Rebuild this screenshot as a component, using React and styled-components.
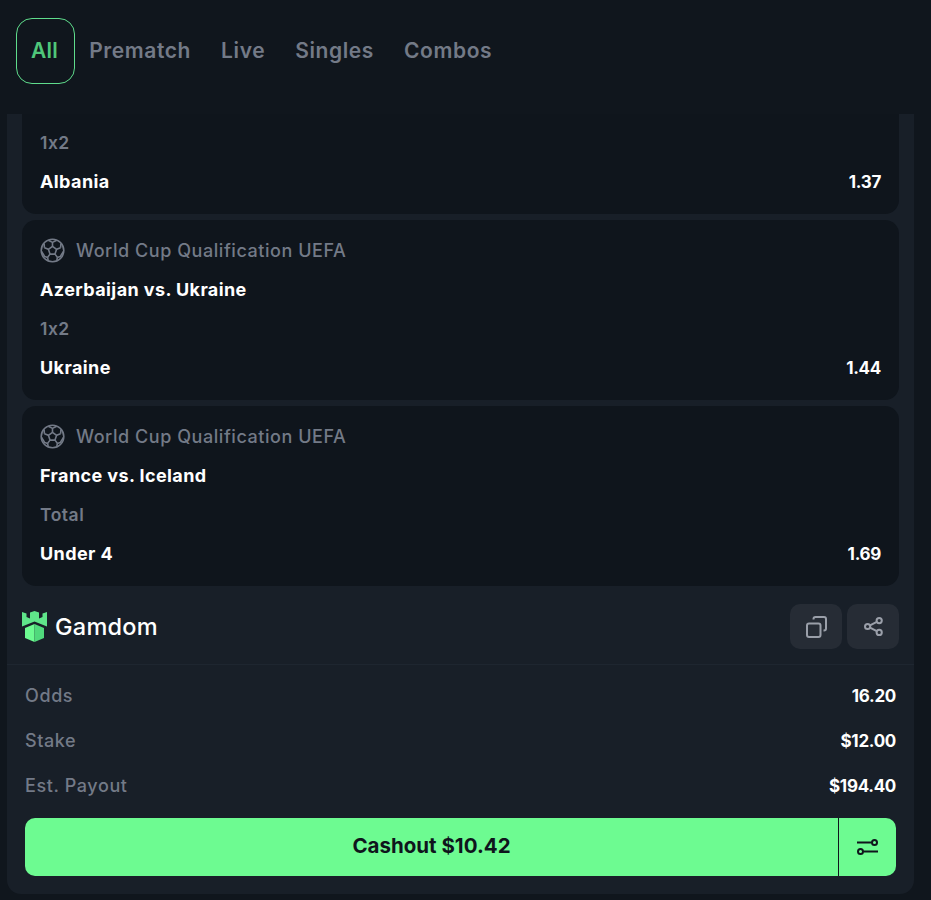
import React from 'react'
import styled, {createGlobalStyle} from 'styled-components'

const GlobalStyle = createGlobalStyle`
  html, body {
    margin: 0;
    height: 900px;
    overflow: hidden;
    background: #10161d;
    font-family: 'Inter', 'Liberation Sans', sans-serif;
    font-feature-settings: 'calt' 0;
  }
`
const Page = styled.div`
  width: 931px;
  height: 900px;
  display: flex;
  flex-direction: column;
`
const Tabs = styled.div`
  height: 114px;
  flex: none;
  box-sizing: border-box;
  padding: 18px 16px 0;
  display: flex;
  align-items: flex-start;
`
const Tab = styled.div`
  height: 66px;
  box-sizing: border-box;
  display: flex;
  align-items: center;
  font-size: 21px;
  font-weight: 600;
  letter-spacing: ${(p) => (p.$active ? '0.3px' : '0.6px')};
  border-radius: 16px;
  color: ${(p) => (p.$active ? '#4fc77a' : '#737a87')};
  border: ${(p) => (p.$active ? '1px solid #5fdc8c' : 'none')};
  padding: ${(p) => (p.$active ? '0 16px 2px 14px' : '0 15px 2px')};
  margin-right: ${(p) => (p.$active ? '-1px' : '0')};
`
const Panel = styled.div`
  margin: 0 17px 6px 7px;
  flex: 1;
  background: #181f28;
  border-radius: 0 0 14px 14px;
  display: flex;
  flex-direction: column;
`
const List = styled.div`
  padding: 0 15px;
  display: flex;
  flex-direction: column;
  gap: 6px;
`
const Card = styled.div`
  background: #0f151c;
  border-radius: ${(p) => (p.$clipped ? '0 0 14px 14px' : '14px')};
  padding: ${(p) => (p.$clipped ? '9px 18px 13px' : '11px 18px 13px')};
  display: flex;
  flex-direction: column;
`
const Row = styled.div`
  height: 39px;
  display: flex;
  align-items: center;
  justify-content: space-between;
`
const League = styled.div`
  display: flex;
  align-items: center;
  gap: 11px;
  font-size: 18px;
  font-weight: 500;
  letter-spacing: 0.55px;
  color: #737a87;
`
const Strong = styled.span`
  font-size: 18px;
  font-weight: 700;
  letter-spacing: 0.4px;
  color: #fff;
`
const Market = styled.span`
  font-size: 17.5px;
  font-weight: 600;
  letter-spacing: 0.5px;
  color: #737a87;
`
const Odd = styled.span`
  font-size: 17px;
  font-weight: 700;
  letter-spacing: -0.3px;
  color: #fff;
`
const BrandBar = styled.div`
  height: 79px;
  box-sizing: border-box;
  padding: 3px 15px 0;
  display: flex;
  align-items: center;
  justify-content: space-between;
  border-bottom: 1px solid #1e2630;
`
const Brand = styled.div`
  display: flex;
  align-items: center;
  gap: 8px;
  font-size: 23.5px;
  font-weight: 500;
  letter-spacing: 0.25px;
  color: #fff;
`
const Actions = styled.div`
  display: flex;
  gap: 5px;
`
const IconButton = styled.div`
  width: 52px;
  height: 45px;
  border-radius: 10px;
  background: #262c35;
  display: flex;
  align-items: center;
  justify-content: center;
  color: #9a9fa9;
`
const Summary = styled.div`
  padding: 8px 18px 0;
  display: flex;
  flex-direction: column;
`
const Stat = styled.div`
  height: 45px;
  display: flex;
  align-items: center;
  justify-content: space-between;
`
const StatLabel = styled.span`
  font-size: 18px;
  font-weight: 500;
  letter-spacing: 0.6px;
  color: #737a87;
`
const Cashout = styled.div`
  margin: 10px 18px 0;
  height: 58px;
  border-radius: 10px;
  background: #6dfb91;
  display: flex;
  color: #0f151c;
`
const CashoutLabel = styled.div`
  flex: 1;
  display: flex;
  align-items: center;
  justify-content: center;
  padding-bottom: 3px;
  font-size: 20.5px;
  font-weight: 700;
  border-right: 1px solid #0f151c;
`
const CashoutMenu = styled.div`
  width: 57px;
  display: flex;
  align-items: center;
  justify-content: center;
`

const BallIcon = () => (
  <svg width="25" height="25" viewBox="0 0 25 25" fill="none" stroke="#737a87" strokeWidth="1.6" strokeLinejoin="round">
    <circle cx="12.5" cy="12.5" r="11.3" />
    <path d="M12.5 8.3l4.1 3-1.6 4.8H10l-1.6-4.8z" />
    <path d="M12.5 8.3V4.4M16.6 11.3l4-1.6M15 16.1l2.4 3.3M10 16.1l-2.4 3.3M8.4 11.3l-4-1.6" />
    <path d="M8.3 2.3l4.2 2.1 4.2-2.1M20.6 9.7l.3-4.2M23.5 13.5l-3.3 5.1-2.8.8M17.4 19.4l-.6 3.3M7.6 19.4l.6 3.3M7.6 19.4l-2.8-.8-3.3-5.1M4.4 9.7l-.3-4.2" />
  </svg>
)
const CopyIcon = () => (
  <svg width="21" height="22" viewBox="0 0 21 22" fill="none" stroke="currentColor" strokeWidth="2" strokeLinejoin="round">
    <rect x="1" y="7.5" width="13.5" height="13.5" rx="2" />
    <path d="M7.5 3.5V3A2 2 0 0 1 9.5 1H18a2 2 0 0 1 2 2v9.5a2 2 0 0 1-2 2h-.5" />
  </svg>
)
const ShareIcon = () => (
  <svg width="19" height="19" viewBox="0 0 19 19" fill="none" stroke="currentColor" strokeWidth="2">
    <circle cx="3.6" cy="9.5" r="2.6" />
    <circle cx="15.2" cy="3.6" r="2.6" />
    <circle cx="15.2" cy="15.4" r="2.6" />
    <path d="M6 8.3l6.8-3.5M6 10.7l6.8 3.5" />
  </svg>
)
const SlidersIcon = () => (
  <svg width="22" height="16" viewBox="0 0 22 16" fill="none" stroke="#0f151c" strokeWidth="2">
    <path d="M0 3.5h14.5M6.5 12.5H21" />
    <circle cx="17.5" cy="3.5" r="2.5" />
    <circle cx="3.5" cy="12.5" r="2.5" />
  </svg>
)
const GamdomLogo = () => (
  <svg width="25" height="31" viewBox="0 0 25 31">
    <path fill="#5fe58a" d="M0 1l4.5 1.5V6L8 7.5v-6L12.5 0 17 1.5v6L20.5 6V2.5L25 1v14.5l-12.5-5L0 15.5z" />
    <path fill="#6dfb91" d="M12.5 13L3 17v10l9.5 4z" />
    <path fill="#50d97c" d="M12.5 13l9.5 4v10l-9.5 4z" />
  </svg>
)

const bets = [
  {match: 'Azerbaijan vs. Ukraine', market: '1x2', pick: 'Ukraine', odd: '1.44'},
  {match: 'France vs. Iceland', market: 'Total', pick: 'Under 4', odd: '1.69'},
]
const stats = [
  ['Odds', '16.20'],
  ['Stake', '$12.00'],
  ['Est. Payout', '$194.40'],
]

export default function App() {
  return (
    <Page>
      <GlobalStyle />
      <Tabs>
        <Tab $active>All</Tab>
        <Tab>Prematch</Tab>
        <Tab>Live</Tab>
        <Tab>Singles</Tab>
        <Tab>Combos</Tab>
      </Tabs>
      <Panel>
        <List>
          <Card $clipped>
            <Row>
              <Market>1x2</Market>
            </Row>
            <Row>
              <Strong>Albania</Strong>
              <Odd>1.37</Odd>
            </Row>
          </Card>
          {bets.map((bet) => (
            <Card key={bet.match}>
              <Row>
                <League>
                  <BallIcon />
                  World Cup Qualification UEFA
                </League>
              </Row>
              <Row>
                <Strong>{bet.match}</Strong>
              </Row>
              <Row>
                <Market>{bet.market}</Market>
              </Row>
              <Row>
                <Strong>{bet.pick}</Strong>
                <Odd>{bet.odd}</Odd>
              </Row>
            </Card>
          ))}
        </List>
        <BrandBar>
          <Brand>
            <GamdomLogo />
            Gamdom
          </Brand>
          <Actions>
            <IconButton>
              <CopyIcon />
            </IconButton>
            <IconButton>
              <ShareIcon />
            </IconButton>
          </Actions>
        </BrandBar>
        <Summary>
          {stats.map(([label, value]) => (
            <Stat key={label}>
              <StatLabel>{label}</StatLabel>
              <Odd>{value}</Odd>
            </Stat>
          ))}
        </Summary>
        <Cashout>
          <CashoutLabel>Cashout $10.42</CashoutLabel>
          <CashoutMenu>
            <SlidersIcon />
          </CashoutMenu>
        </Cashout>
      </Panel>
    </Page>
  )
}
